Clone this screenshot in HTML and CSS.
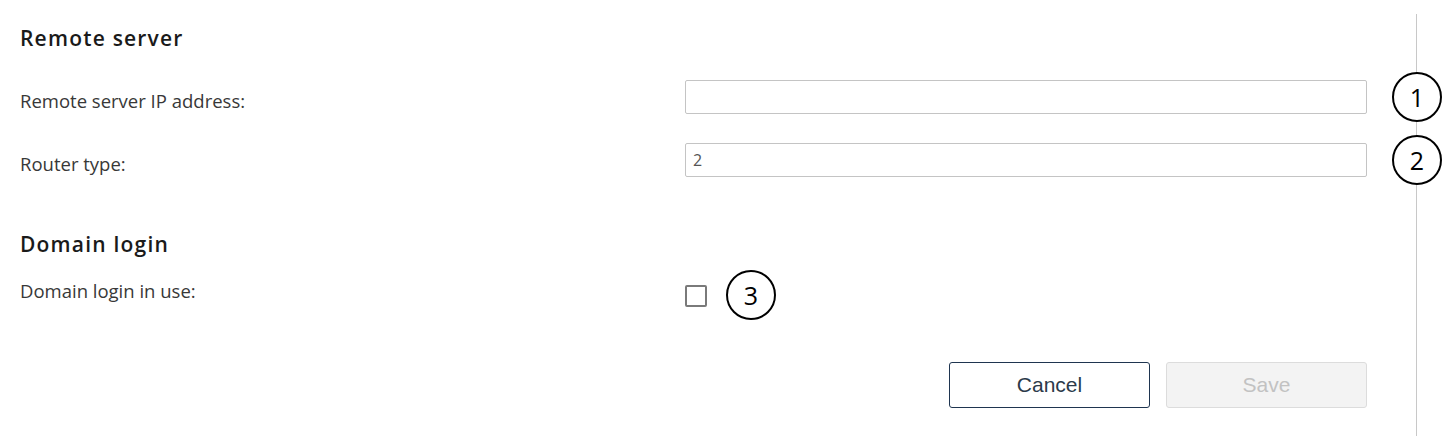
FILE: index.html
```html
<!DOCTYPE html>
<html lang="en">
<head>
  <meta charset="UTF-8" />
  <meta name="viewport" content="width=device-width, initial-scale=1.0">
  <title>Remote server settings</title>
  <link rel="stylesheet" href="styles.css">
</head>
<body>
  <div class="page">
    <form class="settings">
      <h2 class="section-title first">Remote server</h2>

      <div class="row row-ip">
        <label for="ipAddress">Remote server IP address:</label>
        <div class="control">
          <input type="text" id="ipAddress" class="text-input" />
          <span class="marker marker-field">1</span>
        </div>
      </div>

      <div class="row row-router">
        <label for="routerType">Router type:</label>
        <div class="control">
          <input type="text" id="routerType" class="text-input" value="2" />
          <span class="marker marker-field">2</span>
        </div>
      </div>

      <h2 class="section-title second">Domain login</h2>

      <div class="row row-domain">
        <label for="domainLogin">Domain login in use:</label>
        <div class="control">
          <span class="checkbox" id="domainLogin"></span>
          <span class="marker marker-check">3</span>
        </div>
      </div>

      <div class="actions">
        <button type="button" class="btn btn-cancel">Cancel</button>
        <button type="button" class="btn btn-save" disabled>Save</button>
      </div>
    </form>
    <div class="rail"></div>
  </div>
</body>
</html>
```

FILE: styles.css
```css
body {
  margin: 0;
  background: #fff;
  font-family: 'Open Sans', 'Noto Sans', sans-serif;
  color: #383838;
}
.page {
  display: flex;
  height: 436px;
  overflow: hidden;
}
.settings {
  width: 1347px;
  padding: 26px 0 0 20px;
}
.rail {
  width: 1px;
  margin: 14px 0 0 49px;
  background: #c8c8c8;
}
.section-title {
  margin: 0;
  font-size: 21px;
  line-height: 24px;
  font-weight: 600;
  color: #1a1a1a;
  letter-spacing: 1.2px;
}
.section-title.second {
  margin-top: 55px;
}
.row {
  display: grid;
  grid-template-columns: 665px 682px;
  align-items: center;
}
.row label {
  font-size: 18.5px;
  line-height: 22px;
  padding-top: 8px;
}
.row-ip { margin-top: 30px; }
.row-router { margin-top: 29px; }
.row-domain { margin-top: 24px; }
.control {
  position: relative;
  height: 34px;
  display: flex;
  align-items: center;
}
.row-domain .control { height: 24px; }
.row-domain label {
  padding-top: 0;
  padding-bottom: 10px;
}
.text-input {
  box-sizing: border-box;
  width: 100%;
  height: 34px;
  margin: 0;
  padding: 0 7px;
  border: 1px solid #c4c4c4;
  border-radius: 2px;
  font-family: 'Open Sans', sans-serif;
  font-size: 16px;
  color: #555;
  outline: none;
}
.checkbox {
  box-sizing: border-box;
  width: 22px;
  height: 22px;
  border: 2px solid #7a7a7a;
  border-radius: 2px;
}
.marker {
  position: absolute;
  box-sizing: border-box;
  width: 50px;
  height: 50px;
  border: 2px solid #000;
  border-radius: 50%;
  background: #fff;
  display: flex;
  align-items: center;
  justify-content: center;
  font-family: 'Open Sans', sans-serif;
  font-size: 25px;
  color: #000;
  z-index: 2;
}
.marker-field {
  left: 707px;
  top: -8px;
}
.marker-check {
  left: 41px;
  top: -14px;
}
.actions {
  display: flex;
  justify-content: flex-end;
  gap: 16px;
  margin-top: 50px;
}
.btn {
  width: 201px;
  height: 46px;
  border-radius: 3px;
  font-family: 'Liberation Sans', Arial, sans-serif;
  font-size: 21px;
  cursor: pointer;
}
.btn-cancel {
  background: #fff;
  border: 1px solid #1f3550;
  color: #2b3a4a;
}
.btn-save {
  background: #f3f3f3;
  border: 1px solid #dcdcdc;
  color: #c2c2c2;
}
```
